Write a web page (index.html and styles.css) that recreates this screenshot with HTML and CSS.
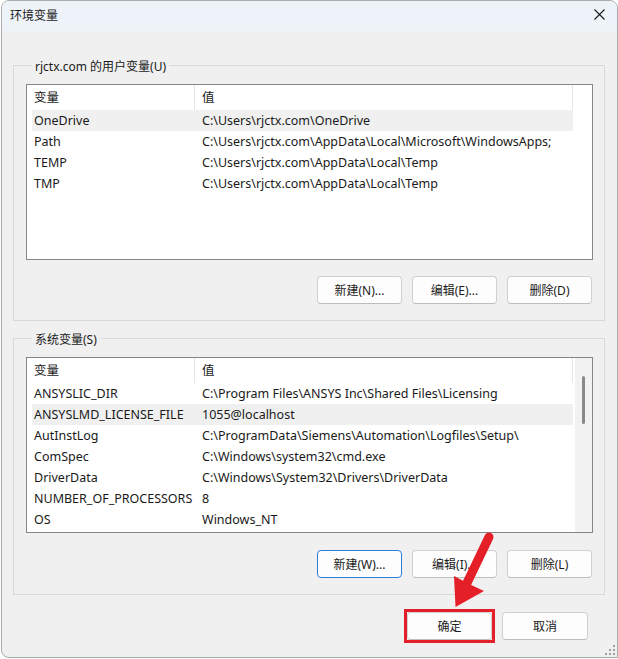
FILE: index.html
```html
<!DOCTYPE html>
<html lang="zh-CN">
<head>
    <meta charset="UTF-8">
    <title>环境变量</title>
    <link rel="stylesheet" href="styles.css">
</head>
<body>
<div class="dialog">
    <div class="titlebar">
        <span class="title">环境变量</span>
        <button class="close" aria-label="关闭">
            <svg width="11" height="11" viewBox="0 0 11 11"><path d="M0.5 0.5L10.5 10.5M10.5 0.5L0.5 10.5" stroke="#1a1a1a" stroke-width="1.1" fill="none"/></svg>
        </button>
    </div>

    <fieldset class="group group-user">
        <legend>rjctx.com 的用户变量(U)</legend>
        <div class="list">
            <div class="list-body">
                <div class="row head"><div class="c1">变量</div><div class="c2">值</div></div>
                <div class="row selected"><div class="c1">OneDrive</div><div class="c2">C:\Users\rjctx.com\OneDrive</div></div>
                <div class="row"><div class="c1">Path</div><div class="c2">C:\Users\rjctx.com\AppData\Local\Microsoft\WindowsApps;</div></div>
                <div class="row"><div class="c1">TEMP</div><div class="c2">C:\Users\rjctx.com\AppData\Local\Temp</div></div>
                <div class="row"><div class="c1">TMP</div><div class="c2">C:\Users\rjctx.com\AppData\Local\Temp</div></div>
            </div>
        </div>
        <div class="actions">
            <button class="btn">新建(N)...</button>
            <button class="btn">编辑(E)...</button>
            <button class="btn">删除(D)</button>
        </div>
    </fieldset>

    <fieldset class="group group-system">
        <legend>系统变量(S)</legend>
        <div class="list">
            <div class="list-body">
                <div class="row head"><div class="c1">变量</div><div class="c2">值</div></div>
                <div class="row"><div class="c1">ANSYSLIC_DIR</div><div class="c2">C:\Program Files\ANSYS Inc\Shared Files\Licensing</div></div>
                <div class="row selected"><div class="c1">ANSYSLMD_LICENSE_FILE</div><div class="c2">1055@localhost</div></div>
                <div class="row"><div class="c1">AutInstLog</div><div class="c2">C:\ProgramData\Siemens\Automation\Logfiles\Setup\</div></div>
                <div class="row"><div class="c1">ComSpec</div><div class="c2">C:\Windows\system32\cmd.exe</div></div>
                <div class="row"><div class="c1">DriverData</div><div class="c2">C:\Windows\System32\Drivers\DriverData</div></div>
                <div class="row"><div class="c1">NUMBER_OF_PROCESSORS</div><div class="c2">8</div></div>
                <div class="row"><div class="c1">OS</div><div class="c2">Windows_NT</div></div>
            </div>
            <div class="scrollbar"><div class="thumb"></div></div>
        </div>
        <div class="actions">
            <button class="btn btn-focus">新建(W)...</button>
            <button class="btn">编辑(I)...</button>
            <button class="btn">删除(L)</button>
        </div>
    </fieldset>

    <div class="footer">
        <span class="mark"><button class="btn btn-ok">确定</button></span>
        <button class="btn">取消</button>
    </div>

    <svg class="grip" width="10" height="10" viewBox="0 0 10 10">
        <rect x="8" y="0" width="2" height="2" fill="#a0a0a0"/>
        <rect x="4" y="4" width="2" height="2" fill="#a0a0a0"/>
        <rect x="8" y="4" width="2" height="2" fill="#a0a0a0"/>
        <rect x="0" y="8" width="2" height="2" fill="#a0a0a0"/>
        <rect x="4" y="8" width="2" height="2" fill="#a0a0a0"/>
        <rect x="8" y="8" width="2" height="2" fill="#a0a0a0"/>
    </svg>
</div>

<!-- red pointer drawn over the OK button -->
<svg class="pointer" width="618" height="659" viewBox="0 0 618 659">
    <line x1="489" y1="537" x2="467" y2="583" stroke="#e41f27" stroke-width="9" stroke-linecap="round"/>
    <polygon points="454,576 455.5,607 484,591 469,584" fill="#e41f27"/>
</svg>
</body>
</html>
```

FILE: styles.css
```css
* {
    box-sizing: border-box;
}
body {
    margin: 0;
    background: #ffffff;
    font-family: "Noto Sans", "Noto Sans CJK SC", sans-serif;
    font-size: 12px;
    color: #1a1a1a;
}
.dialog {
    position: relative;
    width: 617px;
    height: 658px;
    margin-left: 1px;
    background: #f0f0f0;
    border: 1px solid #ababab;
    border-radius: 8px 8px 0 8px;
    overflow: hidden;
}
.titlebar {
    display: flex;
    align-items: center;
    justify-content: space-between;
    height: 30px;
    padding: 0 8px 0 8px;
    background: #eef3f9;
}
.title {
    font-family: "Noto Sans CJK SC", sans-serif;
    line-height: 16px;
    margin-top: -3px;
}
.close {
    display: flex;
    align-items: center;
    justify-content: center;
    width: 20px;
    height: 20px;
    margin-top: -3px;
    padding: 0;
    border: none;
    background: none;
}
.group {
    margin: 24px 12px 0 11px;
    padding: 0 11px 16px 12px;
    border: 1px solid #d9d9d9;
    min-width: 0;
}
.group-system {
    margin-top: 7px;
}
.group legend {
    margin-left: 6px;
    padding: 4px 3px 0;
    line-height: 16px;
}
.list {
    display: flex;
    height: 176px;
    margin-top: 9px;
    background: #ffffff;
    border: 1px solid #868686;
    overflow: hidden;
}
.list-body {
    width: 548px;
}
.row {
    display: flex;
    width: 541px;
    height: 21px;
    margin-left: 5px;
    font-size: 12.5px;
    line-height: 22px;
    white-space: nowrap;
}
.row.head {
    height: 25px;
    line-height: 26px;
}
.row.selected {
    background: #f0f0f0;
}
.c1 {
    width: 163px;
    padding-left: 2px;
    overflow: hidden;
}
.c2 {
    flex: 1;
    padding-left: 7px;
    overflow: hidden;
}
.head .c1,
.head .c2 {
    border-right: 1px solid #e5e5e5;
}
.scrollbar {
    position: relative;
    flex: 1;
    background: #f2f2f2;
}
.thumb {
    position: absolute;
    left: 7px;
    top: 18px;
    width: 3px;
    height: 48px;
    border-radius: 2px;
    background: #8a8a8a;
}
.actions {
    display: flex;
    justify-content: flex-end;
    gap: 10px;
    margin-top: 16px;
    padding-right: 1px;
}
.group-system .actions {
    margin-top: 17px;
}
.btn {
    width: 85px;
    height: 28px;
    padding: 0;
    font: inherit;
    color: #1a1a1a;
    background: #fdfdfd;
    border: 1px solid #d0d0d0;
    border-bottom-color: #bdbdbd;
    border-radius: 4px;
}
.btn-focus {
    border: 1px solid #2b7cd3;
}
.footer {
    display: flex;
    align-items: center;
    justify-content: flex-end;
    gap: 7px;
    margin-top: 14px;
    padding-right: 29px;
}
.footer .btn {
    width: 86px;
}
/* square red frame round the OK button */
.mark {
    display: flex;
    border: 3px solid #e41f27;
}
.footer .mark .btn {
    width: 85px;
}
.grip {
    position: absolute;
    right: 2px;
    bottom: 2px;
}
.pointer {
    position: absolute;
    left: 0;
    top: 0;
    pointer-events: none;
}
```
